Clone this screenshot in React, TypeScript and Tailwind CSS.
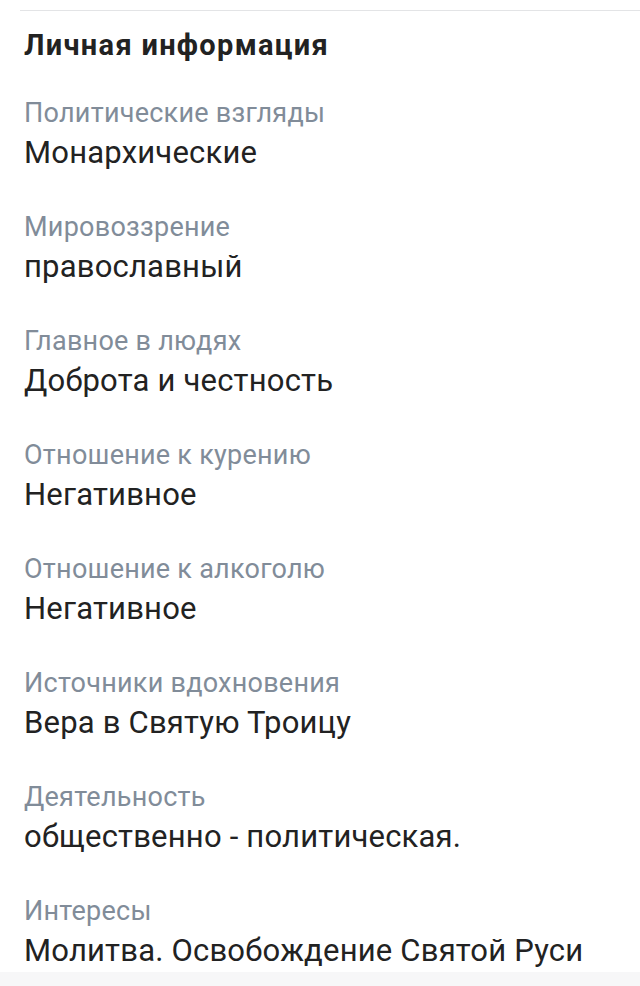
const rows = [
  { label: 'Политические взгляды', value: 'Монархические' },
  { label: 'Мировоззрение', value: 'православный' },
  { label: 'Главное в людях', value: 'Доброта и честность' },
  { label: 'Отношение к курению', value: 'Негативное' },
  { label: 'Отношение к алкоголю', value: 'Негативное' },
  { label: 'Источники вдохновения', value: 'Вера в Святую Троицу' },
  { label: 'Деятельность', value: 'общественно - политическая.' },
  { label: 'Интересы', value: 'Молитва. Освобождение Святой Руси' },
];

export default function App() {
  return (
    <div className="w-[640px] h-[986px] bg-white flex flex-col overflow-hidden font-['Roboto',sans-serif]">
      <div className="h-[10px]" />
      <div className="h-px ml-5 bg-[#e3e4e6]" />
      <div className="flex-1 px-6 pt-[14px]">
        <h2 className="text-[29px] leading-10 font-bold tracking-[1.3px] text-[#222222]">Личная информация</h2>
        <div className="flex flex-col gap-[34px] mt-[28px]">
          {rows.map((row) => (
            <div key={row.label} className="flex flex-col">
              <span className="text-[27px] leading-10 tracking-[0.25px] text-[#818c99]">{row.label}</span>
              <span className="text-[31px] leading-10 tracking-[0.2px] text-[#222222]">{row.value}</span>
            </div>
          ))}
        </div>
      </div>
      <div className="h-[14px] bg-[#f7f7f8]" />
    </div>
  );
}
